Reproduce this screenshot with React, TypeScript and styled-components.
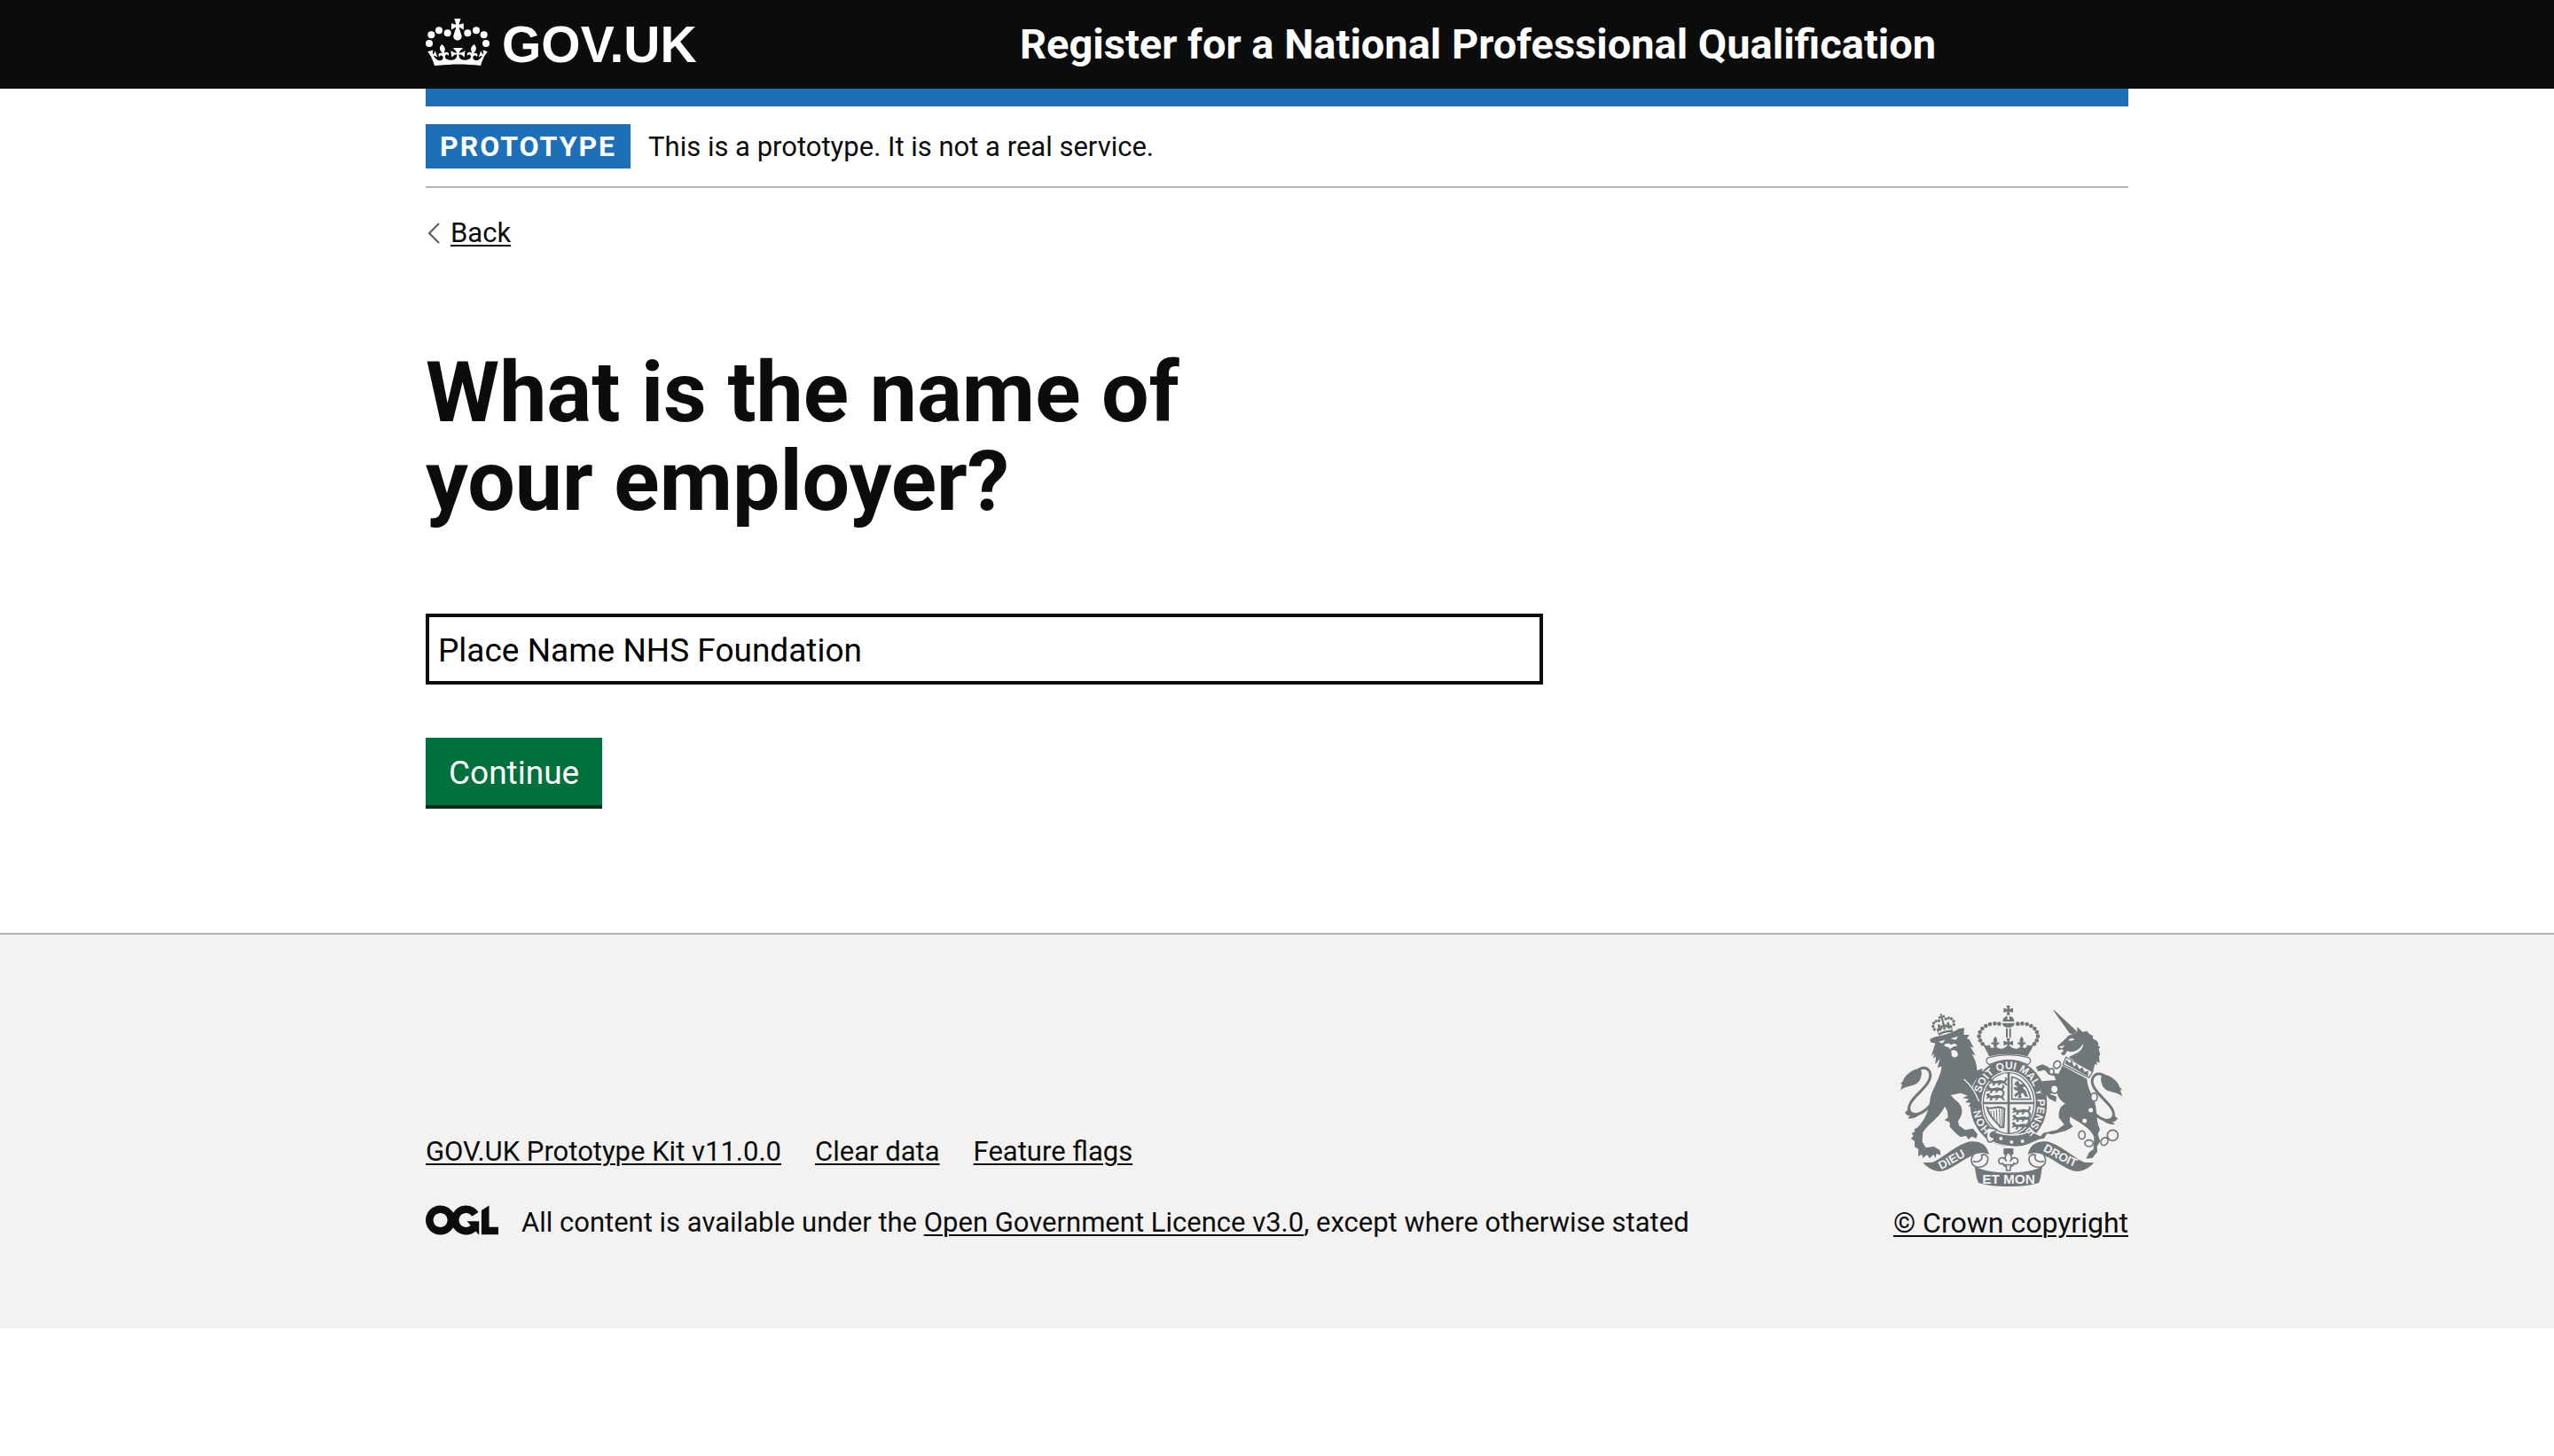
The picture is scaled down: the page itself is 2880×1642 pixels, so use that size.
import React, { useState } from "react";
import styled, { createGlobalStyle } from "styled-components";

const colour = {
  ink: "#0b0c0c",
  white: "#ffffff",
  blue: "#1d70b8",
  border: "#b1b4b6",
  secondary: "#505a5f",
  canvas: "#f3f2f1",
  green: "#00703c",
  greenDark: "#002d18",
  crest: "#6f777b",
};

const GlobalStyle = createGlobalStyle`
  *, *::before, *::after { box-sizing: border-box; }
  body {
    margin: 0;
    background: ${colour.white};
    color: ${colour.ink};
    font-family: Roboto, "Liberation Sans", sans-serif;
    font-size: 31px;
    line-height: 40px;
  }
`;

const Container = styled.div`
  width: calc(100% - 120px);
  max-width: 1920px;
  margin: 0 auto;
`;

const Header = styled.header`
  background: ${colour.ink};
  color: ${colour.white};
`;

const HeaderRow = styled(Container)`
  display: grid;
  grid-template-columns: 1fr 2fr;
  column-gap: 45px;
  align-items: center;
  min-height: 100px;
`;

const HeaderLink = styled.a`
  display: inline-flex;
  align-items: center;
  justify-self: start;
  gap: 14px;
  color: inherit;
  text-decoration: none;
`;

const LogoText = styled.span`
  font: 700 57px/60px "Liberation Sans", sans-serif;
`;

const ServiceName = styled(HeaderLink)`
  font-size: 47px;
  font-weight: 700;
  line-height: 60px;
`;

const CrownSvg = styled.svg`
  width: 72px;
  height: 53px;
  margin-bottom: 5px;
`;

const BlueBar = styled(Container)`
  height: 20px;
  background: ${colour.blue};
`;

const PhaseBanner = styled.div`
  display: flex;
  align-items: baseline;
  gap: 20px;
  padding: 20px 0;
  border-bottom: 2px solid ${colour.border};
`;

const Tag = styled.strong`
  padding: 0 16px;
  background: ${colour.blue};
  color: ${colour.white};
  font-size: 32px;
  line-height: 50px;
  letter-spacing: 2px;
  text-transform: uppercase;
`;

const Link = styled.a`
  color: ${colour.ink};
  text-decoration: underline;
  text-decoration-thickness: 2px;
  text-underline-offset: 3px;
`;

const BackRow = styled.nav`
  display: flex;
  align-items: center;
  gap: 12px;
  margin-top: 31px;
`;

const Chevron = styled.svg`
  width: 16px;
  height: 24px;
`;

const Main = styled.main`
  padding: 110px 0 143px;
`;

const Form = styled.form`
  display: flex;
  flex-direction: column;
  align-items: flex-start;
  max-width: 1260px;
`;

const Heading = styled.h1`
  max-width: 960px;
  margin: 0 0 99px;
  font-size: 95px;
  font-weight: 700;
  line-height: 100px;
`;

const TextInput = styled.input`
  width: 100%;
  height: 80px;
  margin: 0 0 60px;
  padding: 3px 10px 0;
  border: 4px solid ${colour.ink};
  border-radius: 0;
  background: ${colour.white};
  color: #000;
  font: inherit;
  font-size: 37px;
  outline: 0;
`;

const Button = styled.button`
  height: 76px;
  padding: 3px 26px 0;
  border: 0;
  background: ${colour.green};
  box-shadow: 0 4px 0 ${colour.greenDark};
  color: ${colour.white};
  font: inherit;
  font-size: 37px;
`;

const Footer = styled.footer`
  margin-top: 1px;
  border-top: 2px solid ${colour.border};
  background: ${colour.canvas};
`;

const FooterRow = styled(Container)`
  display: flex;
  align-items: flex-end;
  justify-content: space-between;
  gap: 60px;
  padding: 80px 0 99px;
`;

const FooterMeta = styled.div`
  display: flex;
  flex-direction: column;
  gap: 40px;
`;

const FooterLinks = styled.ul`
  display: flex;
  gap: 38px;
  margin: 0;
  padding: 0;
  list-style: none;
`;

const Licence = styled.div`
  display: flex;
  align-items: flex-start;
  gap: 26px;
`;

const OglSvg = styled.svg`
  flex: none;
  width: 82px;
  height: 34px;
`;

const Copyright = styled.a`
  display: flex;
  flex-direction: column;
  align-items: center;
  gap: 21px;
  color: ${colour.ink};
  font-size: 32px;
  text-decoration: none;
`;

const CopyrightText = styled(Link).attrs({ as: "span" })``;

const CrestSvg = styled.svg`
  width: 250px;
  height: 204px;
`;

const MottoText = styled.text<{ $size: number }>`
  fill: ${colour.canvas};
  font: 700 ${(p) => p.$size}px "Liberation Sans", sans-serif;
`;

const Crown = () => (
  <CrownSvg viewBox="0 0 216 159" fill="currentColor" aria-hidden="true">
    {[[12, 84], [19, 55], [45, 40], [74, 49]].map(([x, y]) => (
      <React.Fragment key={x}>
        <circle cx={x} cy={y} r="12" />
        <circle cx={216 - x} cy={y} r="12" />
      </React.Fragment>
    ))}
    <path
      transform="translate(6.8) scale(6.3)"
      d="M17 4.7l2.3 1.2V2.5l-2.3.7-.2-.2.9-3h-3.4l.9 3-.2.2-2.3-.7v3.4L15 4.7l.2.2-1.3 4c-.1.2-.1.4-.1.6 0 1.1.8 2 1.9 2.2h.7c1-.2 1.9-1.1 1.9-2.1 0-.2 0-.4-.1-.6l-1.3-4z"
    />
    <path
      transform="translate(6.6 -3) scale(6.34 5.4)"
      d="M16 29.2c4.4 0 8.6.3 12.3.8 1.1-4.5 2.4-7 3.7-8.8l-2.5-.9c.2 1.3.3 1.9 0 2.7-.4-.4-.8-1.1-1.1-2.3l-1.2 4c.7-.5 1.3-.8 2-.9-1.1 2.5-2.6 3.1-3.5 3-1.1-.2-1.7-1.2-1.5-2.1.3-1.2 1.5-1.5 2.1-.1 1.1-2.3-.8-3-2-2.3 1.9-1.9 2.1-3.5.6-5.6-2.1 1.6-2.1 3.2-1.2 5.5-1.2-1.4-3.2-.6-2.5 1.6.9-1.4 2.1-.5 1.9.8-.2 1.1-1.7 2.1-3.5 1.9-2.7-.2-2.9-2.1-2.9-3.6.7-.1 1.9.5 2.9 1.9l.4-4.3c-1.1 1.1-2.1 1.4-3.2 1.4.4-1.2 2.1-3 2.1-3h-5.4s1.7 1.9 2.1 3c-1.1 0-2.1-.2-3.2-1.4l.4 4.3c1-1.4 2.2-2 2.9-1.9-.1 1.5-.2 3.4-2.9 3.6-1.9.2-3.4-.8-3.5-1.9-.2-1.3 1-2.2 1.9-.8.7-2.3-1.2-3-2.5-1.6.9-2.2.9-3.9-1.2-5.5-1.5 2-1.3 3.7.6 5.6-1.2-.7-3.1 0-2 2.3.6-1.4 1.8-1.1 2.1.1.2.9-.3 1.9-1.5 2.1-.9.2-2.4-.5-3.5-3 .6 0 1.2.3 2 .9l-1.2-4c-.3 1.1-.7 1.9-1.1 2.3-.3-.8-.2-1.4 0-2.7L0 21.2c1.3 1.8 2.6 4.3 3.7 8.8 3.7-.5 7.9-.8 12.3-.8z"
    />
  </CrownSvg>
);

const OglLogo = () => (
  <OglSvg viewBox="0 0 483.2 195.7" role="img" aria-label="Open Government Licence" fill="currentColor">
    <path d="M421.5 142.8V.1l-50.7 32.3v161.1h112.4v-50.7zm-122.3-9.6A47.12 47.12 0 0 1 221 97.8c0-26 21.1-47.1 47.1-47.1 16.7 0 31.4 8.7 39.7 21.8l42.7-27.2A97.63 97.63 0 0 0 268.1 0c-36.5 0-68.3 20.1-85.1 49.7A98 98 0 0 0 97.8 0C43.9 0 0 43.9 0 97.8s43.9 97.8 97.8 97.8c36.5 0 68.3-20.1 85.1-49.7a97.76 97.76 0 0 0 149.6 25.4l19.4 22.2h3v-87.8h-80l24.3 27.5zM97.8 145c-26 0-47.1-21.1-47.1-47.1s21.1-47.1 47.1-47.1 47.1 21.1 47.1 47.1S123.8 145 97.8 145" />
  </OglSvg>
);

const pattee = "M-6-16H6L3-4 16-8V8L3 4 6 16H-6L-3 4-16 8V-8L-3-4Z";
const fleur = "M0-18C8-8 8-2 3 5 8-1 16 1 14 10 11 6 7 8 5 16H-5C-7 8-11 6-14 10-16 1-8-1-3 5-8-2-8-8 0-18Z";
const passant =
  "M0 6L6 0 12 2 14 8 22 9 40 6 52 9 58 2 54-3 60-3 64 4 58 13 62 20 66 24 58 24 52 17 42 17 38 24 30 24 36 18 24 17 20 25 12 25 16 18 10 16 4 20 0 17 6 12Z";

const Tail = () => (
  <>
    <path d="M134 258C163 243 185 268 166 301C148 333 98 362 101 393C103 424 145 412 172 380" fill="none" stroke={colour.crest} strokeWidth="9" />
    <path d="M138 254C112 258 86 277 81 297L72 307 78 308 72 330C91 309 127 320 139 291C146 274 145 263 138 254ZM101 385C93 402 89 404 86 402C93 415 100 416 106 414L96 424C112 426 128 420 138 410L110 402Z" />
  </>
);

const Ribbon = () => (
  <>
    <path d="M148 574L181 572C215 560 264 509 310 502C348 500 365 516 372 546C352 538 332 540 318 549C281 561 242 603 202 603C181 602 164 590 148 574Z" />
    <path d="M318 548C306 567 314 584 330 588C350 592 368 580 368 560C368 550 357 543 346 548C352 559 342 576 318 569" fill={colour.canvas} stroke={colour.crest} strokeWidth="5" />
  </>
);

const Crest = () => (
  <CrestSvg viewBox="72 42 750 612" fill={colour.crest} aria-hidden="true">
    <defs>
      <path id="garter" d="M438 487A98 115 0 0 1 438 257A98 115 0 0 1 438 487" />
      <path id="ribbon-left" d="M208 598C241 582 276 560 325 533" />
      <path id="ribbon-right" d="M549 531C590 552 625 578 690 597" />
    </defs>

    <g>
      <path transform="translate(437 58)" d={pattee} />
      <path d="M418 96C418 84 428 78 434 78V90H440V78C448 78 457 84 457 96ZM416 101H459C457 113 447 116 437 116S418 112 416 101ZM429 119H435V151H429ZM440 119H446V151H440Z" />
      {[[406, 104], [391, 103], [375, 105], [361, 111], [349, 120], [341, 132], [338, 146], [342, 160], [350, 172]].map(([x, y]) => (
        <React.Fragment key={`${x}-${y}`}>
          <circle cx={x} cy={y} r="7" />
          <circle cx={875 - x} cy={y} r="7" />
        </React.Fragment>
      ))}
      <path transform="translate(393 164)" d={fleur} />
      <path transform="translate(482 164)" d={fleur} />
      <path transform="translate(437 169)" d={pattee} />
      <path d="M351 169C360 180 366 180 375 174C374 188 385 190 393 177C404 193 422 190 430 180H445C453 190 471 193 482 177C490 190 501 188 500 174C509 180 515 180 524 169C519 188 507 201 503 214C460 204 415 204 372 214C367 201 357 188 351 169Z" />
      <path d="M370 218C415 206 460 206 505 218C516 224 514 236 503 242C460 222 415 222 372 242C361 236 359 224 370 218Z" fill={colour.canvas} stroke={colour.crest} strokeWidth="4" />
    </g>

    <ellipse cx="438" cy="372" rx="111" ry="128" fill={colour.canvas} stroke={colour.crest} strokeWidth="38" />
    <ellipse cx="438" cy="372" rx="86" ry="103" fill={colour.canvas} stroke={colour.crest} strokeWidth="4" />
    <path d="M434 269H442V475H434ZM352 368H524V376H352Z" />
    {[[370, 288], [361, 313], [361, 338], [450, 386], [450, 411], [448, 436]].map(([x, y]) => (
      <path key={`${x}-${y}`} transform={`translate(${x} ${y})`} d={passant} />
    ))}
    <path d="M449 284C475 288 505 312 513 359H449Z" fill="none" stroke={colour.crest} strokeWidth="5" />
    <path d="M462 300L470 296 476 308 489 307 495 316 485 319 496 331 504 351 494 350 486 337 479 342 482 354 470 354 473 343 460 352 457 344 471 332 458 327 455 318 470 319 457 308Z" />
    <path d="M365 387C382 397 400 376 424 391L421 454H410C401 438 373 423 365 387Z" fill="none" stroke={colour.crest} strokeWidth="6" />
    <path d="M377 398L380 415M387 398L390 429M397 393L399 439M407 391L409 448M416 392V451" fill="none" stroke={colour.crest} strokeWidth="3" />

    <path d="M371 459C405 481 470 490 511 466L559 489L500 514C468 527 395 517 366 493Z" stroke={colour.canvas} strokeWidth="4" />
    <path d="M377 456C362 460 358 491 371 503C380 507 389 498 390 489L380 487C371 479 379 468 391 470L397 462Z" fill={colour.canvas} stroke={colour.crest} strokeWidth="5" />
    <g fill={colour.canvas}>
      <circle cx="412" cy="492" r="6" />
      <circle cx="448" cy="504" r="6" />
      <circle cx="485" cy="501" r="6" />
    </g>
    <MottoText $size={36}>
      <textPath href="#garter" startOffset="66">
        HONI<tspan dx="44">SOIT QUI MAL Y PENSE</tspan>
      </textPath>
    </MottoText>

    <Tail />
    <path d="M172 155L174 166 190 170 176 214 185 204 184 222 192 214 190 241 206 222 197 252 211 248C213 273 179 327 173 355C168 397 156 431 128 456L119 460 121 468 110 475 116 482 108 493 120 500 120 520 133 528 132 553 144 545 148 558 162 547 171 559 184 546 191 558 194 543 208 548 206 532 185 519 158 523 146 503 148 470C171 438 207 418 222 383L231 400 233 421 221 429 239 437 239 452 260 475 275 487 294 483 302 495 314 485 328 492 333 478 318 458 291 463 270 448 267 433C286 408 286 381 257 361L242 345 276 338 300 347 283 354 303 359 291 370 311 371 301 384 316 383 315 397 327 391 333 402 338 391 349 396 347 378 336 362 325 334 313 319 326 294 347 272 350 255 331 262C331 242 325 224 314 206L326 211 308 181 320 185 305 157 297 153 305 141 286 141 288 118 270 120C245 137 210 143 190 148Z" />
    <path d="M287 291C312 313 328 340 338 367" fill="none" stroke={colour.canvas} strokeWidth="4" />
    <path d="M201 164L224 158 214 170ZM241 154L267 146 260 158ZM219 176C228 168 237 169 245 175C253 168 262 171 264 179C251 178 245 184 240 191C238 180 227 185 219 176ZM244 194C255 190 265 194 267 207C266 218 250 222 245 210Z" fill={colour.canvas} />
    <g transform="translate(217 103) rotate(-14)">
      <path d="M-24 36L-27 15H27L24 36C10 31-10 31-24 36Z" />
      <path d="M-22 28C-8 24 8 24 22 28L23 20 14 22 7 14 0 23-7 14-14 22-23 20Z" fill={colour.canvas} />
      {[[-34, 12], [-36, 1], [-31, -9], [-22, -14], [-12, -13]].map(([x, y]) => (
        <React.Fragment key={x}>
          <circle cx={x} cy={y} r="5" />
          <circle cx={-x} cy={y} r="5" />
        </React.Fragment>
      ))}
      <path transform="translate(0 -23) scale(.65)" d={pattee} />
      <path d="M-3-14H3V6H-3Z" />
      <path transform="translate(-16 9) scale(.7)" d={fleur} />
      <path transform="translate(16 9) scale(.7)" d={fleur} />
      <path transform="translate(0 9) scale(.7)" d={pattee} />
    </g>

    <g transform="translate(894 20) scale(-1 1)">
      <Tail />
    </g>
    <path d="M588 57L594 59 668 128 656 140 644 136Z" />
    <path d="M641 143L658 138 670 128 670 114 688 131 704 129 710 137 724 145 722 153 737 162 742 170 740 176 748 184 742 188 748 207 744 214 746 236 736 231 737 244 730 239 724 265 692 252 642 216 666 204C681 198 691 185 690 171C681 187 668 198 647 199L636 196 628 209 619 209 615 203 625 195 618 190 607 193 602 180 626 159Z" />
    <path d="M640 160C646 151 655 151 661 157C654 162 646 162 640 160ZM607 181L629 177 618 187Z" fill={colour.canvas} />
    <path d="M632 216L722 266 710 286 622 242Z" fill={colour.canvas} stroke={colour.crest} strokeWidth="4" />
    <path d="M628 238L634 224 644 237 651 228 659 248 669 240 677 257 688 251 694 266 707 263 707 281Z" />
    <path d="M620 245L703 290C704 316 717 337 727 362C740 397 732 431 747 461L740 477 748 501 737 518 738 537 721 558 700 560 710 539 725 528 727 487C717 458 681 440 645 418L645 437 656 452 631 466 585 478 568 475 558 492 538 494 555 473 601 463 626 445 608 421C607 399 611 381 630 374C614 365 603 350 601 333L577 341 600 350 598 368 576 358 565 344 548 340 541 315 551 298 598 294 592 280 573 275 560 260 538 265 530 250 552 241 571 249 590 269 607 273Z" />
    <g fill={colour.canvas} stroke={colour.crest} strokeWidth="5">
      <ellipse cx="602" cy="242" rx="11" ry="13" transform="rotate(35 602 242)" />
      <ellipse cx="583" cy="265" rx="8" ry="10" />
      <ellipse cx="593" cy="325" rx="13" ry="14" />
      <ellipse cx="727" cy="352" rx="11" ry="14" />
      <circle cx="716" cy="396" r="10" />
      <circle cx="695" cy="432" r="10" />
      <ellipse cx="686" cy="480" rx="11" ry="14" />
      <ellipse cx="710" cy="508" rx="14" ry="11" />
      <ellipse cx="762" cy="502" rx="11" ry="14" transform="rotate(35 762 502)" />
      <circle cx="790" cy="481" r="18" />
    </g>

    <Ribbon />
    <g transform="translate(875) scale(-1 1)">
      <Ribbon />
    </g>
    <path d="M321 583C355 616 520 616 554 583C547 600 550 623 540 641C500 658 376 658 336 641C326 623 328 600 321 583Z" />
    <MottoText $size={40}>
      <textPath href="#ribbon-left" startOffset="2">DIEU</textPath>
    </MottoText>
    <MottoText $size={40}>
      <textPath href="#ribbon-right" startOffset="4">DROIT</textPath>
    </MottoText>
    <MottoText $size={46} x="438" y="645" textAnchor="middle">ET MON</MottoText>

    <path d="M421 525H454V546H421Z" />
    <path d="M437 538C450 549 450 560 443 569C453 550 472 556 469 572C466 578 461 579 456 576C454 582 449 586 444 587L443 600H431L430 587C425 586 420 582 418 576C413 579 408 578 405 572C402 556 421 550 431 569C424 560 424 549 437 538Z" fill={colour.canvas} stroke={colour.crest} strokeWidth="5" />
    <path d="M421 581H453" fill="none" stroke={colour.crest} strokeWidth="5" />
  </CrestSvg>
);

const footerLinks = ["GOV.UK Prototype Kit v11.0.0", "Clear data", "Feature flags"];

export default function App() {
  const [employer, setEmployer] = useState("Place Name NHS Foundation");

  return (
    <>
      <GlobalStyle />
      <Header>
        <HeaderRow>
          <HeaderLink href="#">
            <Crown />
            <LogoText>GOV.UK</LogoText>
          </HeaderLink>
          <ServiceName href="#">Register for a National Professional Qualification</ServiceName>
        </HeaderRow>
      </Header>
      <BlueBar />
      <Container>
        <PhaseBanner>
          <Tag>Prototype</Tag>
          <span>This is a prototype. It is not a real service.</span>
        </PhaseBanner>
        <BackRow>
          <Chevron viewBox="0 0 16 24" fill="none" stroke={colour.secondary} strokeWidth="2" aria-hidden="true">
            <path d="M15 1L4 12L15 23" />
          </Chevron>
          <Link href="#">Back</Link>
        </BackRow>
        <Main>
          <Form onSubmit={(event) => event.preventDefault()}>
            <Heading>
              <label htmlFor="employer">What is the name of your employer?</label>
            </Heading>
            <TextInput
              id="employer"
              name="employer"
              type="text"
              value={employer}
              onChange={(event) => setEmployer(event.target.value)}
            />
            <Button type="submit">Continue</Button>
          </Form>
        </Main>
      </Container>
      <Footer>
        <FooterRow>
          <FooterMeta>
            <FooterLinks>
              {footerLinks.map((label) => (
                <li key={label}>
                  <Link href="#">{label}</Link>
                </li>
              ))}
            </FooterLinks>
            <Licence>
              <OglLogo />
              <span>
                All content is available under the <Link href="#">Open Government Licence v3.0</Link>, except where
                otherwise stated
              </span>
            </Licence>
          </FooterMeta>
          <Copyright href="#">
            <Crest />
            <CopyrightText>© Crown copyright</CopyrightText>
          </Copyright>
        </FooterRow>
      </Footer>
    </>
  );
}
